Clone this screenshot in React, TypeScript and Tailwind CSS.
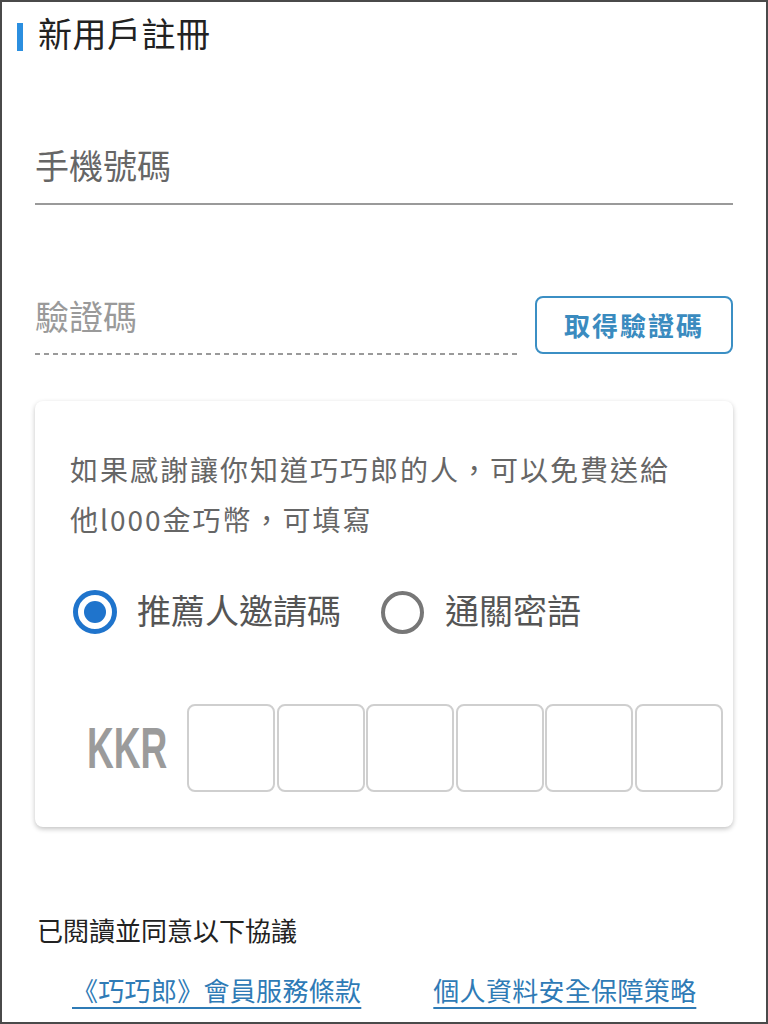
import React from "react";

export default function App() {
  const boxes = [0, 1, 2, 3, 4, 5];
  return (
    <div className="w-[768px] h-[1024px] overflow-hidden border-2 border-[#4a4a4a] bg-white font-['Noto_Sans_CJK_TC','Noto_Sans',sans-serif]">
      {/* Header */}
      <div className="mt-[14px] flex items-center pl-[15px]">
        <div className="h-[28px] w-[6px] bg-[#2b8fe0]" />
        <div className="ml-[15px] -mt-[4px] mb-[4px] text-[34px] leading-[41px] tracking-[0.5px] text-[#222]">新用戶註冊</div>
      </div>

      <div className="px-[33px]">
        {/* Phone */}
        <div className="mt-[88px] border-b-2 border-[#9a9a9a] pb-[18px]">
          <div className="text-[34px] leading-[40px] text-[#666]">手機號碼</div>
        </div>

        {/* Code row */}
        <div className="mt-[91px] flex items-start gap-[18px]">
          <div className="flex-1 pt-0">
            <div className="pb-[17px] text-[34px] leading-[40px] text-[#9a9a9a]">驗證碼</div>
            <div className="h-[2px] bg-[linear-gradient(to_right,#9a9a9a_55%,transparent_55%)] bg-[length:9px_2px] bg-repeat-x" />
          </div>
          <div className="flex h-[58px] w-[198px] items-center justify-center rounded-[8px] border-2 border-[#3b8fc4] pb-[2px] text-[26px] font-bold tracking-[2px] text-[#3a8bbf]">
            取得驗證碼
          </div>
        </div>

        {/* Card */}
        <div className="mt-[46px] h-[426px] rounded-[8px] bg-white px-[35px] pt-[43px] shadow-[0_2px_5px_rgba(0,0,0,0.24)]">
          <div className="text-[28px] leading-[50px] tracking-[2px] text-[#666]">
            <div>如果感謝讓你知道巧巧郎的人，可以免費送給</div>
            <div>他l000金巧幣，可填寫</div>
          </div>

          <div className="mt-[46px] flex items-center pl-[3px]">
            <div className="flex h-[44px] w-[44px] items-center justify-center rounded-full border-[5px] border-[#1f74cc]">
              <div className="h-[22px] w-[22px] rounded-full bg-[#1f74cc]" />
            </div>
            <div className="ml-[20px] -mt-[4px] text-[34px] leading-[44px] text-[#555]">推薦人邀請碼</div>
            <div className="ml-[40px] h-[43px] w-[43px] rounded-full border-[4px] border-[#777]" />
            <div className="ml-[21px] -mt-[4px] text-[34px] leading-[44px] text-[#555]">通關密語</div>
          </div>

          <div className="mt-[70px] flex items-center pl-[17px]">
            <div className="w-[100px]">
              <div className="origin-left scale-x-[0.64] font-['Liberation_Sans',sans-serif] text-[58px] font-bold leading-[60px] text-[#9b9b9b]">
                KKR
              </div>
            </div>
            <div className="flex gap-[1.5px]">
              {boxes.map((b) => (
                <div key={b} className="h-[88px] w-[88px] rounded-[8px] border-2 border-[#cfcfcf] bg-white" />
              ))}
            </div>
          </div>
        </div>

        {/* Agreement */}
        <div className="mt-[85px] pl-[2px] text-[26px] leading-[36px] text-[#222]">已閱讀並同意以下協議</div>
        <div className="mt-[24px] flex pl-[37px] text-[26px] leading-[36px] text-[#2f7bb6]">
          <span className="underline decoration-2 underline-offset-[6px] tracking-[0.3px]">《巧巧郎》會員服務條款</span>
          <span className="ml-[72px] underline decoration-2 underline-offset-[6px] tracking-[0.3px]">個人資料安全保障策略</span>
        </div>
      </div>
    </div>
  );
}
